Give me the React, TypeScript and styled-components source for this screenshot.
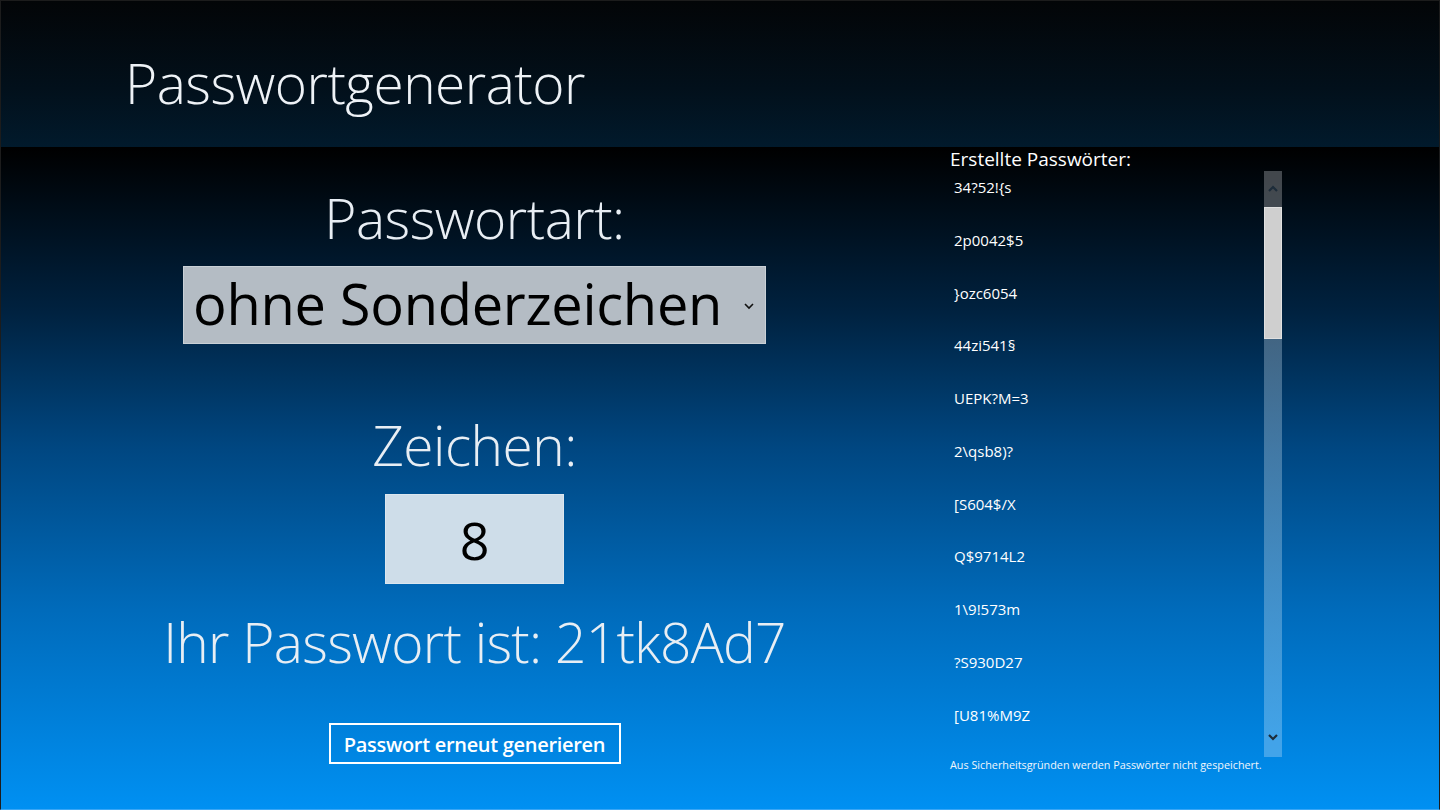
import React, { useState } from "react"
import styled, { createGlobalStyle } from "styled-components"

const GlobalStyle = createGlobalStyle`
  html, body {
    margin: 0;
    padding: 0;
    background: #000;
  }
  body {
    font-family: "Open Sans", "Noto Sans", sans-serif;
    overflow: hidden;
  }
`

const history = [
  "34?52!{s",
  "2p0042$5",
  "}ozc6054",
  "44zi541§",
  "UEPK?M=3",
  "2\\qsb8)?",
  "[S604$/X",
  "Q$9714L2",
  "1\\9!573m",
  "?S930D27",
  "[U81%M9Z",
]

const App: React.FC = () => {
  const [length] = useState(8)
  const [password] = useState("21tk8Ad7")

  return (
    <Page>
      <GlobalStyle />
      <Header>
        <Title>Passwortgenerator</Title>
      </Header>
      <Main>
        <Generator>
          <Label>Passwortart:</Label>
          <Select>
            <span>ohne Sonderzeichen</span>
            <Chevron viewBox="0 0 12 8">
              <polyline points="2,2 6,6 10,2" />
            </Chevron>
          </Select>
          <Label $top={66}>Zeichen:</Label>
          <NumberBox>{length}</NumberBox>
          <Result>Ihr Passwort ist: {password}</Result>
          <RegenButton type="button">Passwort erneut generieren</RegenButton>
        </Generator>
        <History>
          <HistoryTitle>Erstellte Passwörter:</HistoryTitle>
          <ListFrame>
            <List>
              {history.map((p, i) => (
                <Item key={i}>{p}</Item>
              ))}
            </List>
            <ScrollBar>
              <ArrowButton>
                <svg width="12" height="8" viewBox="0 0 12 8">
                  <polyline points="2,6 6,2 10,6" />
                </svg>
              </ArrowButton>
              <Thumb />
              <Track />
              <ArrowButton $down>
                <svg width="12" height="8" viewBox="0 0 12 8">
                  <polyline points="2,2 6,6 10,2" />
                </svg>
              </ArrowButton>
            </ScrollBar>
          </ListFrame>
          <Note>Aus Sicherheitsgründen werden Passwörter nicht gespeichert.</Note>
        </History>
      </Main>
    </Page>
  )
}

const Page = styled.div`
  width: 1440px;
  height: 810px;
  display: flex;
  flex-direction: column;
  color: #fff;
  border: 1px solid #1c1c1c;
  border-bottom-color: #3aa6f5;
  box-sizing: border-box;
`

const Header = styled.header`
  height: 146px;
  flex: none;
  background: linear-gradient(180deg, #030507 0%, #02101b 60%, #011a2c 100%);
  display: flex;
  align-items: center;
  padding-left: 124px;
`

const Title = styled.h1`
  margin: 16px 0 0;
  font-weight: 300;
  font-size: 55px;
  letter-spacing: -0.5px;
  color: #eef2f6;
`

const Main = styled.main`
  flex: 1;
  display: grid;
  grid-template-columns: 947px 1fr;
  background: linear-gradient(180deg, #000000 0%, #002240 25%, #004680 45%, #006bbb 70%, #0090f2 100%);
`

const Generator = styled.section`
  display: flex;
  flex-direction: column;
  align-items: center;
  padding-top: 36px;
`

const Label = styled.div<{ $top?: number }>`
  margin-top: ${(p) => p.$top ?? 0}px;
  font-weight: 300;
  font-size: 55px;
  line-height: 70px;
  letter-spacing: -0.5px;
  color: #e8eef4;
`

const Select = styled.div`
  margin-top: 13px;
  width: 583px;
  height: 78px;
  box-sizing: border-box;
  background: #b4bcc4;
  border: 1px solid #c9d0d6;
  color: #000;
  display: flex;
  align-items: center;
  justify-content: space-between;
  padding: 0 10px 4px 9px;
  font-size: 56px;
  letter-spacing: -0.3px;
`

const Chevron = styled.svg`
  width: 12px;
  height: 8px;
  margin-top: 6px;
  fill: none;
  stroke: #111;
  stroke-width: 1.6;
`

const NumberBox = styled.div`
  margin-top: 14px;
  width: 179px;
  height: 90px;
  box-sizing: border-box;
  background: #cedde9;
  border: 1px solid #dbe6ef;
  color: #000;
  display: flex;
  align-items: center;
  justify-content: center;
  font-size: 52px;
  font-weight: 400;
`

const Result = styled.div`
  margin-top: 21px;
  font-weight: 300;
  font-size: 55px;
  line-height: 74px;
  letter-spacing: -0.7px;
  color: #e8eef4;
`

const RegenButton = styled.button`
  margin-top: 44px;
  width: 292px;
  height: 41px;
  box-sizing: border-box;
  background: transparent;
  border: 2px solid #fff;
  color: #fff;
  font-family: "Open Sans", "Noto Sans", sans-serif;
  font-weight: 600;
  font-size: 20px;
  letter-spacing: -0.3px;
  cursor: pointer;
  padding: 2px 0 0;
`

const History = styled.aside`
  display: flex;
  flex-direction: column;
  padding-left: 2px;
`

const HistoryTitle = styled.div`
  margin-top: 1px;
  font-size: 19px;
  line-height: 22px;
  color: #fff;
`

const ListFrame = styled.div`
  margin-top: 1px;
  width: 332px;
  height: 586px;
  display: flex;
`

const List = styled.ul`
  list-style: none;
  margin: 0;
  padding: 0;
  flex: 1;
  overflow: hidden;
`

const Item = styled.li`
  height: 52.75px;
  padding: 6px 0 0 4px;
  box-sizing: border-box;
  font-size: 15px;
  line-height: 20px;
  color: #fff;
`

const ScrollBar = styled.div`
  width: 18px;
  display: flex;
  flex-direction: column;
`

const ArrowButton = styled.div<{ $down?: boolean }>`
  height: ${(p) => (p.$down ? 24 : 36)}px;
  display: flex;
  align-items: ${(p) => (p.$down ? "flex-start" : "center")};
  justify-content: center;
  background: ${(p) => (p.$down ? "rgba(120, 190, 240, 0.55)" : "rgba(110, 115, 120, 0.6)")};
  svg {
    fill: none;
    stroke: #1d2c3a;
    stroke-width: 2.2;
  }
`

const Thumb = styled.div`
  height: 132px;
  background: #cfcfcf;
  border: 1px solid #e0e0e0;
  box-sizing: border-box;
`

const Track = styled.div`
  flex: 1;
  background: linear-gradient(180deg, rgba(120, 150, 175, 0.55) 0%, rgba(120, 190, 240, 0.55) 100%);
`

const Note = styled.div`
  margin-top: 1px;
  font-size: 10.8px;
  line-height: 14px;
  color: #f0f6fc;
`

export default App
